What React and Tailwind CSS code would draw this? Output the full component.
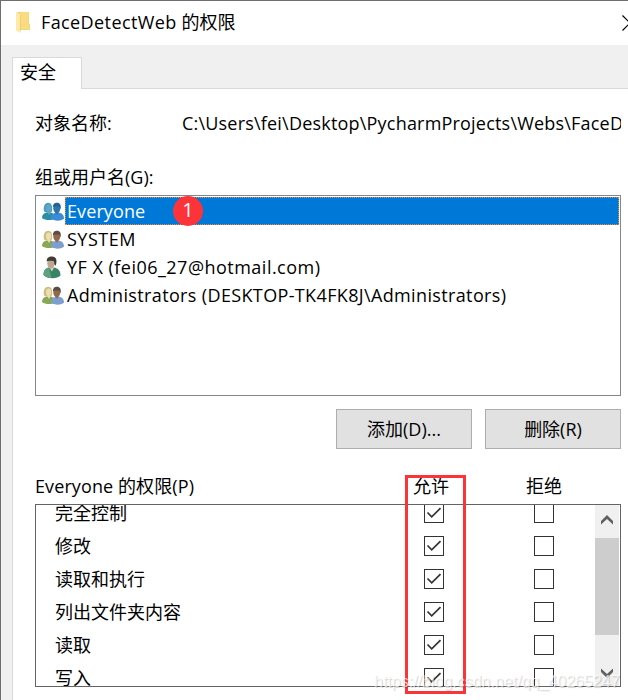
import React from 'react';

const groups = [
  { id: 1, name: 'Everyone', icon: 'group', selected: true },
  { id: 2, name: 'SYSTEM', icon: 'group', tracking: 'tracking-[0.5px]' },
  { id: 3, name: 'YF X (fei06_27@hotmail.com)', icon: 'user', tracking: 'tracking-[0.48px]' },
  { id: 4, name: 'Administrators (DESKTOP-TK4FK8J\\Administrators)', icon: 'group', tracking: 'tracking-[0.36px]' }
];

const permissions = ['完全控制', '修改', '读取和执行', '列出文件夹内容', '读取', '写入'];

const FolderIcon = () => (
  <svg width="14" height="22" viewBox="0 0 14 22">
    <path d="M1.500 0H13v11.500l1 1V18H3z" fill="#f3d075" />
    <path d="M4 0h8.500v12l.8 1v4.500H5z" fill="#fadb82" />
    <path d="M0 0l4.500 2.500V19L3.800 21 0 18z" fill="#ffe9a6" />
    <path d="M4.500 3v16" stroke="#e9c56a" strokeWidth="0.600" />
  </svg>
);

const GroupIcon = ({ selected }) => {
  const c = selected
    ? { hair: '#4a9cc0', face: '#63a5c4', body: '#2b8ea4', hair2: '#1c629c', face2: '#2e75ac', body2: '#3c8bd6' }
    : { hair: '#cdbf78', face: '#ecdcb8', body: '#88a852', hair2: '#5a4c42', face2: '#94694a', body2: '#7c9fd0' };
  return (
    <svg width="22" height="19" viewBox="0 0 22 19">
      <path d="M0 16c0-3.500 1.800-5 5-5.500h4c2.500.5 4 2.500 4 6-3.500 2.400-10 2-13-.5z" fill={c.body} />
      <path d="M2 9.500C1 5 2.500.7 6.200.7c3.600 0 4.600 4.300 3.600 9L6 11z" fill={c.hair} />
      <ellipse cx="6.600" cy="6.300" rx="2.600" ry="3.700" fill={c.face} />
      <path d="M4.800 9.500l2.200 3.500 2-3.500z" fill={c.face} />
      <path d="M9 16.500c0-3.500 1.700-5.200 4.500-5.800h4c3 .6 4.500 2.500 4.500 6-3.500 2.600-9.700 2.600-13-.2z" fill={c.body2} />
      <ellipse cx="14.800" cy="6.300" rx="3.500" ry="4.900" fill={c.face2} />
      <path d="M11 5.200C10.700 2 12.700.7 15 .7c3 0 4.500 2.300 3.500 6.300-.6-.7-.7-1.800-1.200-2.600-2 .3-4.600-.6-6.300.8z" fill={c.hair2} />
      <path d="M12.700 10.300l2.300 2.400 2-2.400z" fill={c.face2} />
    </svg>
  );
};

const UserIcon = () => (
  <svg className="mr-[2px] shrink-0" width="18" height="23" viewBox="0 0 18 23">
    <path d="M.5 19c0-4.500 2-6.800 6-7.500h4.500c4 .8 6.500 3 6.500 8-4 4-13 3.500-17-.5z" fill="#3b8367" />
    <path d="M.5 19c0-4.500 1.700-6.800 5.500-7.500L8.500 22c-3.300 0-6-1-8-3z" fill="#5ca280" />
    <path d="M6 11l3 4.500 2.300-4.500z" fill="#dfd2c2" />
    <ellipse cx="8" cy="7.200" rx="3.700" ry="5.300" fill="#bfa78f" />
    <path d="M3.800 5.500C3.500 2 6 .5 9 .6c4.200.2 5.600 3.700 3.600 9.200-1.400-.7-1.400-3-1.700-4.800-2.500.3-5-.9-7.100.5z" fill="#3d3a37" />
  </svg>
);

const Checkbox = ({ checked }) => (
  <div className="flex h-5 w-5 items-center justify-center border border-[#333] bg-white">
    {checked && (
      <svg width="18" height="18" viewBox="0 0 18 18" fill="none">
        <path d="M2.500 8.500l4.200 4.300L15.500 4.200" stroke="#333" strokeWidth="1.700" />
      </svg>
    )}
  </div>
);

const Chevron = ({ className }) => (
  <svg className={className} width="12" height="10" viewBox="0 0 12 10">
    <path d="M6 0l6 6v3.500L6 4 0 9.500V6z" fill="#606060" />
  </svg>
);

const App = () => {
  return (
    <div className="relative flex h-[700px] w-[628px] flex-col overflow-hidden border-l border-t border-[#6f6d70] bg-[#f0f0f0] font-['Open_Sans','Noto_Sans_CJK_SC',sans-serif] text-[18px] leading-6 whitespace-nowrap text-black">
      {/* Title bar */}
      <div className="flex h-11 shrink-0 items-center bg-white pl-[15px]">
        <FolderIcon />
        <span className="ml-[11px] pb-[2px]">
          <span className="tracking-[0.4px]">FaceDetectWeb</span> 的权限
        </span>
        <svg className="ml-auto" width="6" height="16" viewBox="0 0 6 16" fill="none">
          <path d="M.5.500l7.500 7.500-7.500 7.500" stroke="#000" strokeWidth="1.200" />
        </svg>
      </div>

      {/* Tab */}
      <div className="flex h-[43px] shrink-0 items-end pl-[11px]">
        <div className="z-10 -mb-px h-8 w-[70px] border border-b-0 border-[#d9d9d9] bg-white pt-[2px] pl-[7px]">安全</div>
      </div>

      {/* Security page */}
      <div className="ml-[11px] flex flex-1 flex-col border-l border-t border-[#d9d9d9] bg-white pl-[22px]">
        <div className="mt-[22px] flex h-6 w-[586px] overflow-hidden">
          <span className="w-[147px] shrink-0">对象名称:</span>
          <span className="tracking-[0.2px]">C:\Users\fei\Desktop\PycharmProjects\Webs\FaceD</span>
        </div>

        <div className="mt-[30px] h-6">组或用户名(G):</div>
        <div className="mt-[6px] h-[201px] w-[586px] border border-[#828790] p-px">
          {groups.map((group) => (
            <div key={group.id} className="flex h-7 items-center">
              <div className="flex w-7 shrink-0 items-center justify-center pl-[4px]">
                {group.icon === 'user' ? <UserIcon /> : <GroupIcon selected={group.selected} />}
              </div>
              {group.selected ? (
                <div className="flex h-7 flex-1 items-center border border-dotted border-[#ff8728] bg-[#0078d7] pl-[1px] text-white">
                  <span className="w-[106px] tracking-[0.1px]">{group.name}</span>
                  <span className="z-10 flex h-[30px] w-[30px] items-center justify-center rounded-full bg-[#fc3439] pb-[2px] text-[20px]">1</span>
                </div>
              ) : (
                <span className={`pl-[2px] ${group.tracking}`}>{group.name}</span>
              )}
            </div>
          ))}
        </div>

        <div className="mt-[13px] flex w-[586px] justify-end gap-[13px]">
          <button className="h-10 w-[136px] border border-[#adadad] bg-[#e1e1e1]">添加(D)...</button>
          <button className="h-10 w-[136px] border border-[#adadad] bg-[#e1e1e1]">删除(R)</button>
        </div>

        {/* Permission list */}
        <div className="mt-[25px] flex h-6">
          <span className="w-[378px] tracking-[0.1px]">Everyone 的权限(P)</span>
          <span className="w-[113px]">允许</span>
          <span>拒绝</span>
        </div>
        <div className="mt-[6px] flex h-[183px] w-[586px] overflow-hidden border border-[#646464]">
          <div className="-mt-[9px] flex-1">
            {permissions.map((name) => (
              <div key={name} className="flex h-[33px] items-center pl-[19px]">
                <span className="w-[369px]">{name}</span>
                <Checkbox checked />
                <div className="ml-[90px]">
                  <Checkbox />
                </div>
              </div>
            ))}
          </div>
          <div className="mr-px flex w-6 flex-col items-center bg-[#f0f0f0]">
            <div className="flex h-[33px] items-center">
              <Chevron className="mb-[4px]" />
            </div>
            <div className="h-[97px] w-6 bg-[#cdcdcd]" />
            <div className="flex flex-1 items-center">
              <Chevron className="mt-[25px] rotate-180" />
            </div>
          </div>
        </div>
      </div>

      {/* Highlight over the allow column */}
      <div className="absolute top-[474px] left-[404px] h-[219px] w-[61px] border-[3px] border-[#fc3439]" />

      <div className="absolute top-[671px] left-[373px] font-['Liberation_Sans',sans-serif] text-[16px] leading-5 text-white/70 [text-shadow:1px_1px_1px_rgba(0,0,0,0.18)]">
        https://blog.csdn.net/qq_40265247
      </div>
    </div>
  );
};

export default App;
